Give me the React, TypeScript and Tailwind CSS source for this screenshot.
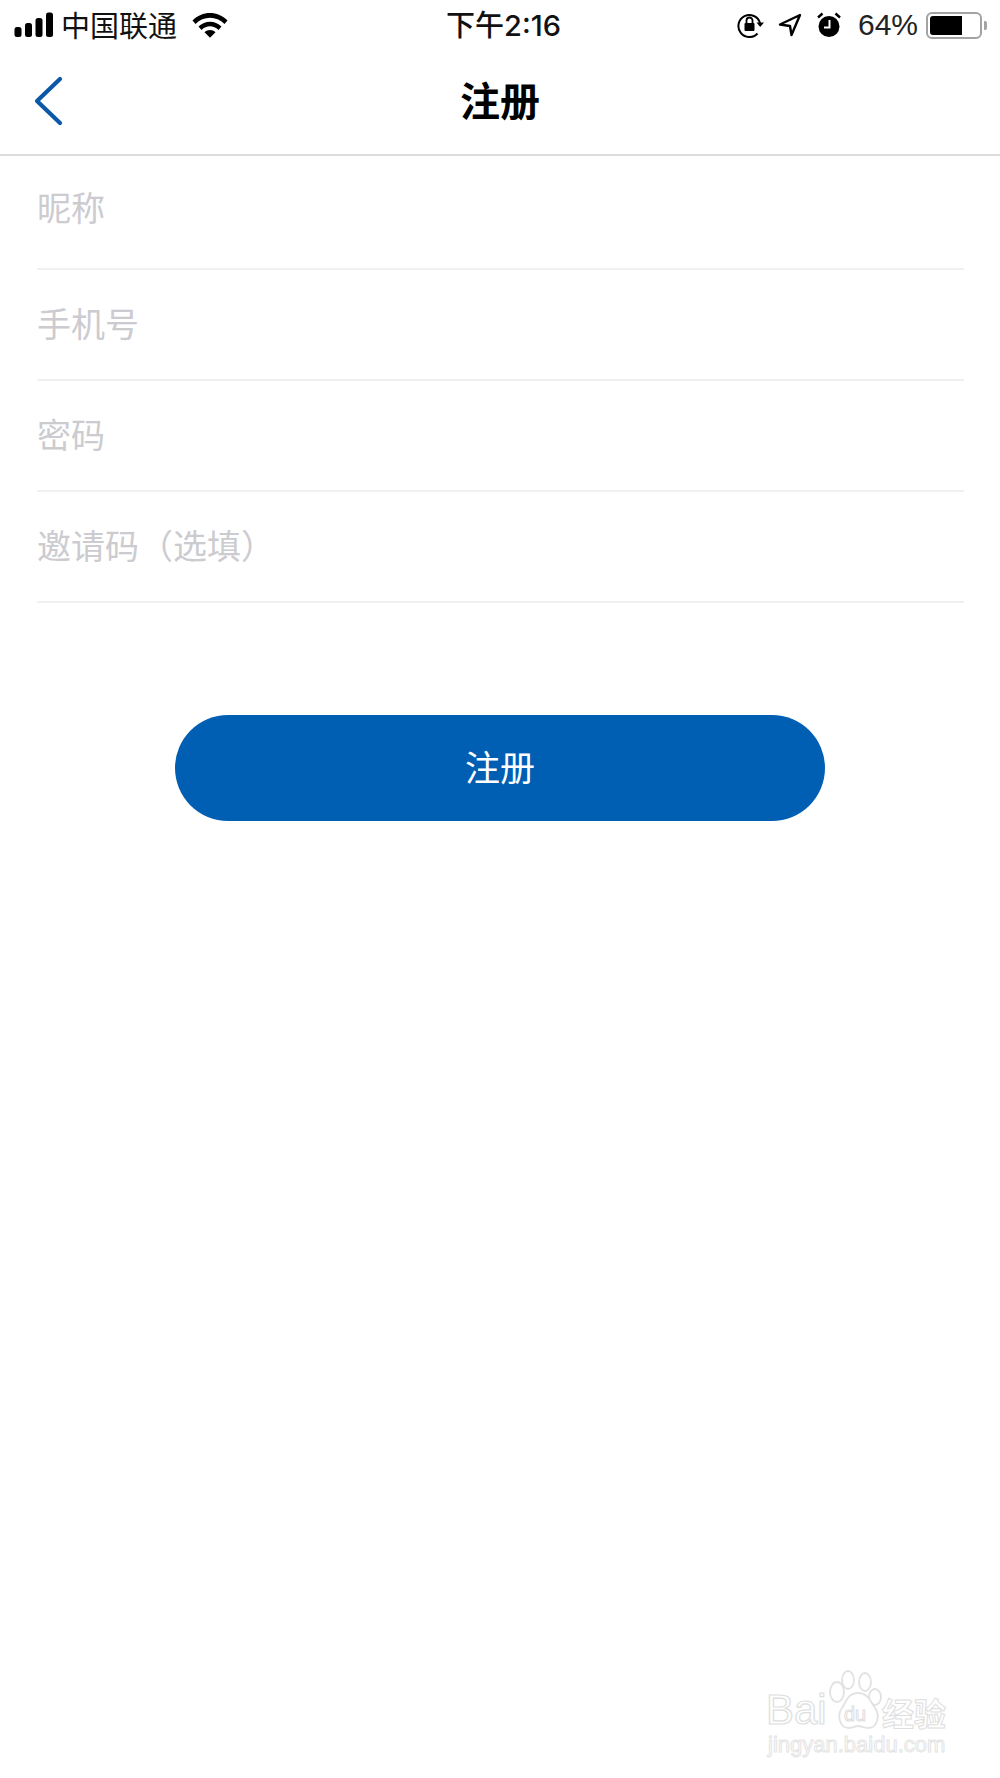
const fieldLabels = ["手机号", "密码", "邀请码（选填）"];

function SignalBars() {
  return (
    <svg width="40" height="26" viewBox="0 0 40 26" fill="#000">
      <rect x="0.5" y="15" width="7" height="10" rx="2.5" />
      <rect x="11" y="11" width="7" height="14" rx="2.5" />
      <rect x="21.5" y="6" width="7" height="19" rx="2.5" />
      <rect x="32" y="0.5" width="7" height="24.5" rx="2.5" />
    </svg>
  );
}

function Wifi() {
  return (
    <svg width="36" height="26" viewBox="0 0 36 26" fill="#000">
      <path d="M0.5 8.5C10 -1.5 26 -1.5 35.5 8.5L32.5 12C24.5 3.5 11.5 3.5 3.5 12Z" />
      <path d="M6.5 14.5C13 8 23 8 29.5 14.5L26.5 18C21.5 13 14.5 13 9.5 18Z" />
      <path d="M12.5 20.2C15.5 17.4 20.5 17.4 23.5 20.2L18 25.8Z" />
    </svg>
  );
}

function RotationLock() {
  return (
    <svg width="28" height="26" viewBox="0 0 28 26" fill="none">
      <path d="M20.5 21.5A11 11 0 1 1 23 11" stroke="#000" strokeWidth="2" />
      <path d="M19.5 10.5H27L23.2 15Z" fill="#000" />
      <rect x="7.5" y="11" width="10" height="8" rx="1" fill="#000" />
      <path d="M9.5 11V8.5a3 3 0 0 1 6 0V11" stroke="#000" strokeWidth="1.8" />
    </svg>
  );
}

function LocationArrow() {
  return (
    <svg width="24" height="24" viewBox="0 0 24 24" fill="none">
      <path d="M22 2L2 11.5L12 13L13.5 22Z" stroke="#000" strokeWidth="2.4" strokeLinejoin="round" />
    </svg>
  );
}

function Alarm() {
  return (
    <svg width="24" height="26" viewBox="0 0 24 26" fill="#000">
      <circle cx="12" cy="14.5" r="10.5" />
      <path d="M1 5.5L5.5 1.5M23 5.5L18.5 1.5" stroke="#000" strokeWidth="2.4" />
      <path d="M12.5 8V15.5H7" stroke="#fff" strokeWidth="2" fill="none" />
    </svg>
  );
}

function Battery() {
  return (
    <div className="flex items-center">
      <div className="h-[27px] w-[56px] rounded-[6px] border-2 border-[#a3a3a3] p-[2px]">
        <div className="h-full w-[32px] rounded-l-[3px] bg-black" />
      </div>
      <div className="ml-[2px] h-[9px] w-[3px] rounded-r-[2px] bg-[#a3a3a3]" />
    </div>
  );
}

function Watermark() {
  return (
    <div className="absolute left-[766px] top-[1668px] h-[100px] w-[190px]">
      <svg className="absolute left-[0px] top-[0px]" width="190" height="70" viewBox="0 0 190 70" fill="#fff" stroke="#e2e2e2" strokeWidth="1.8">
        <ellipse cx="71" cy="24" rx="7" ry="10" />
        <ellipse cx="82" cy="12" rx="6" ry="9" />
        <ellipse cx="99" cy="14" rx="6" ry="9" />
        <ellipse cx="109" cy="29" rx="6" ry="8" />
        <path d="M92 25C82 25 80 34 76 40C71 47 73 60 83 60C87 60 89 58 92 58C95 58 98 60 102 60C112 60 114 47 109 40C105 34 102 25 92 25Z" />
      </svg>
      <span className="absolute left-[0px] top-[18px] font-['Liberation_Sans',sans-serif] text-[42px] leading-[48px] text-white [-webkit-text-stroke:1.2px_#dedede]">
        Bai
      </span>
      <span className="absolute left-[78px] top-[34px] font-['Liberation_Sans',sans-serif] text-[20px] leading-[24px] text-white [-webkit-text-stroke:1px_#dedede]">
        du
      </span>
      <span className="absolute left-[116px] top-[25px] font-['Noto_Sans_CJK_SC',sans-serif] text-[32px] font-bold leading-[38px] text-white [-webkit-text-stroke:1px_#dedede]">
        经验
      </span>
      <span className="absolute left-[2px] top-[64px] font-['Liberation_Sans',sans-serif] text-[22px] leading-[26px] text-white [-webkit-text-stroke:1px_#e4e4e4]">
        jingyan.baidu.com
      </span>
    </div>
  );
}

export default function App() {
  return (
    <div className="relative h-[1778px] w-[1000px] overflow-hidden bg-white font-['Noto_Sans_CJK_SC',sans-serif]">
      {/* Status bar */}
      <div className="flex h-[50px] items-center justify-between pl-[14px] pr-[13px]">
        <div className="flex w-[300px] items-center">
          <SignalBars />
          <span className="ml-[7px] -translate-y-[1px] text-[29px] leading-[34px] text-[#111]">中国联通</span>
          <div className="ml-[15px]">
            <Wifi />
          </div>
        </div>
        <span className="translate-x-[3px] translate-y-[1px] font-['Inter','Noto_Sans_CJK_SC',sans-serif] text-[29px] font-medium leading-[34px] text-[#111]">下午2:16</span>
        <div className="flex w-[300px] items-center justify-end">
          <RotationLock />
          <div className="ml-[13px]">
            <LocationArrow />
          </div>
          <div className="ml-[15px]">
            <Alarm />
          </div>
          <span className="ml-[17px] font-['Liberation_Sans',sans-serif] text-[30px] leading-[34px] text-[#222]">64%</span>
          <div className="ml-[8px]">
            <Battery />
          </div>
        </div>
      </div>

      {/* Nav */}
      <div className="relative flex h-[106px] items-center justify-center border-b-2 border-[#dcdcdc]">
        <button className="absolute left-[33px] top-[26px]">
          <svg width="30" height="50" viewBox="0 0 30 50" fill="none">
            <path d="M27 3L4 25L27 47" stroke="#0b58a8" strokeWidth="4.2" strokeLinecap="round" strokeLinejoin="round" />
          </svg>
        </button>
        <h1 className="-translate-y-[3px] text-[40px] font-semibold leading-[50px] text-black">注册</h1>
      </div>

      {/* Form */}
      <div className="mx-[37px] w-[927px]">
        <div className="h-[114px] border-b-2 border-[#f0f0f0] pt-[24px] text-[34px] leading-[54px] text-[#cbcbd0]">昵称</div>
        {fieldLabels.map((label) => (
          <div key={label} className="h-[111px] border-b-2 border-[#f0f0f0] pt-[26px] text-[34px] leading-[54px] text-[#cbcbd0]">
            {label}
          </div>
        ))}
      </div>

      <div className="mt-[112px] flex justify-center">
        <button className="h-[106px] w-[650px] rounded-[53px] bg-[#005eb3] pb-[4px] text-[35px] text-white">注册</button>
      </div>

      <Watermark />
    </div>
  );
}
